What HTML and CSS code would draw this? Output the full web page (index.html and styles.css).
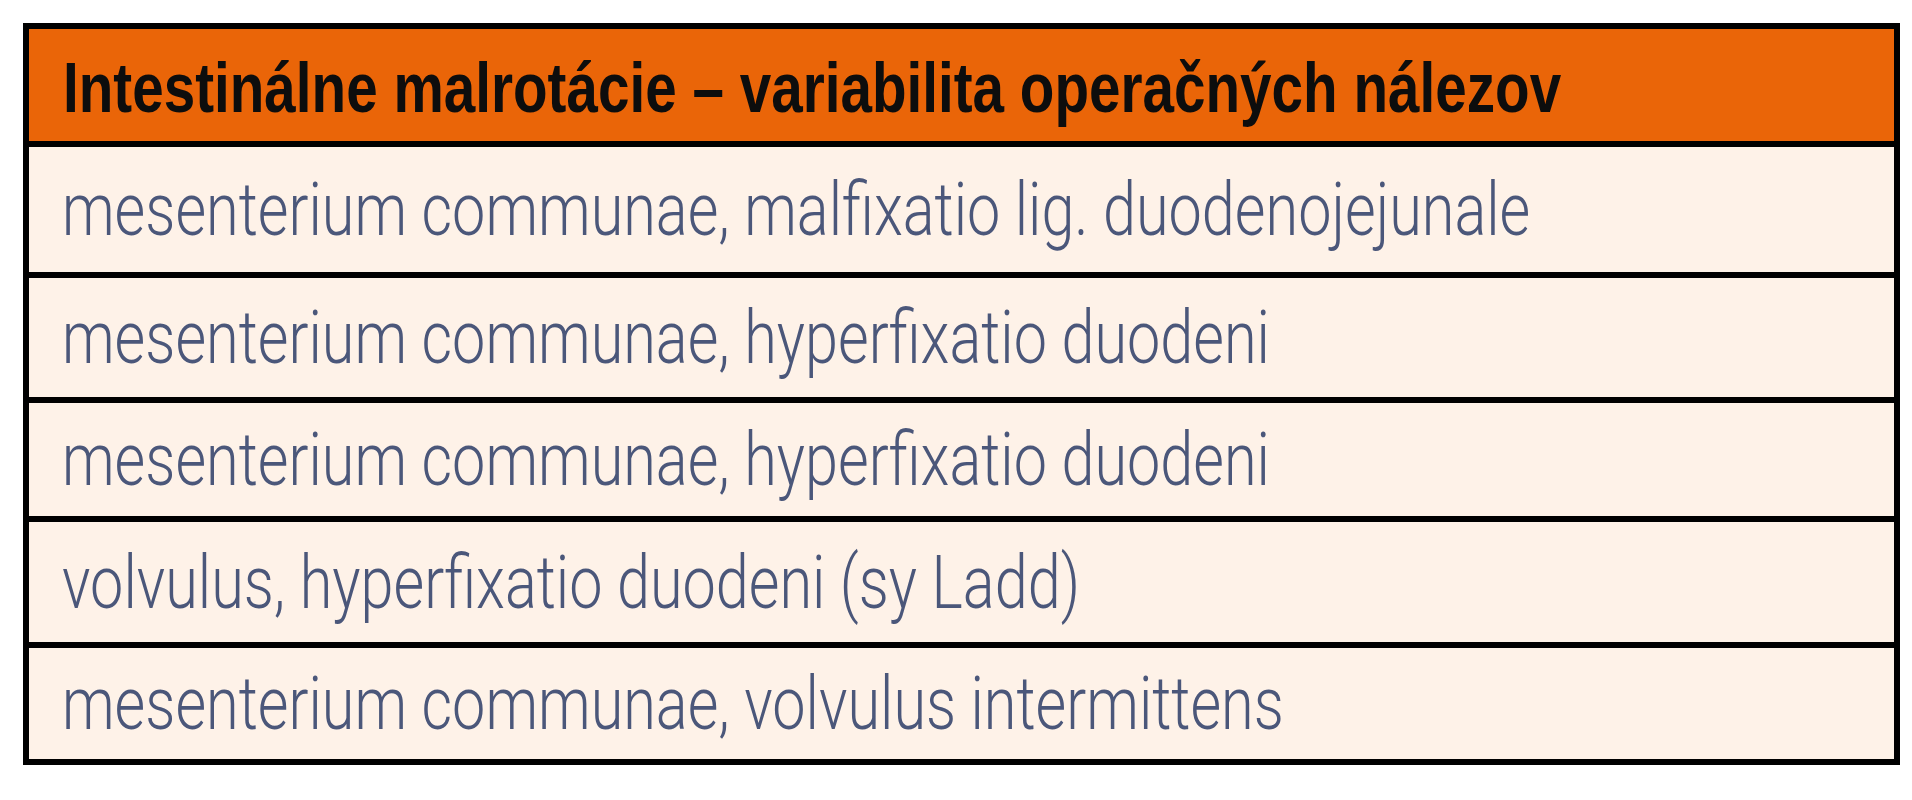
FILE: index.html
```html
<!DOCTYPE html>
<html lang="sk">
<head>
<meta charset="utf-8">
<title>Intestinálne malrotácie</title>
<link rel="stylesheet" href="styles.css">
</head>
<body>
<div class="table">
  <div class="head"><span class="head-text">Intestinálne malrotácie – variabilita operačných nálezov</span></div>
  <div class="row r1"><span class="cell-text">mesenterium communae, malfixatio lig. duodenojejunale</span></div>
  <div class="row r2"><span class="cell-text">mesenterium communae, hyperfixatio duodeni</span></div>
  <div class="row r3"><span class="cell-text">mesenterium communae, hyperfixatio duodeni</span></div>
  <div class="row r4"><span class="cell-text">volvulus, hyperfixatio duodeni (sy Ladd)</span></div>
  <div class="row r5"><span class="cell-text">mesenterium communae, volvulus intermittens</span></div>
</div>
</body>
</html>
```
FILE: styles.css
```css
html, body {
  margin: 0;
  padding: 0;
  background: #ffffff;
}
body {
  padding: 23px 0 0 23px;
}
.table {
  width: 1877px;
  box-sizing: border-box;
  border: 6px solid #000;
  display: flex;
  flex-direction: column;
  background: #fef2e8;
}
.head {
  height: 112px;
  box-sizing: border-box;
  background: #ea6508;
  padding: 6px 0 0 34px;
  display: flex;
  align-items: center;
}
.head-text {
  font-family: "Liberation Sans", Arial, sans-serif;
  font-weight: bold;
  font-size: 70px;
  color: #0d0d0d;
  white-space: nowrap;
  transform: scaleX(0.809);
  transform-origin: 0 50%;
}
.row {
  border-top: 6px solid #000;
  box-sizing: border-box;
  padding-left: 33px;
  display: flex;
  align-items: center;
}
.r1 { height: 131px; }
.r2 { height: 125px; }
.r3 { height: 119px; }
.r4 { height: 126px; }
.r5 { height: 117px; }
.cell-text {
  font-family: Roboto, "Liberation Sans", sans-serif;
  font-weight: 300;
  font-size: 74px;
  color: #4b577a;
  white-space: nowrap;
  transform: scaleX(0.802);
  transform-origin: 0 50%;
}
```
